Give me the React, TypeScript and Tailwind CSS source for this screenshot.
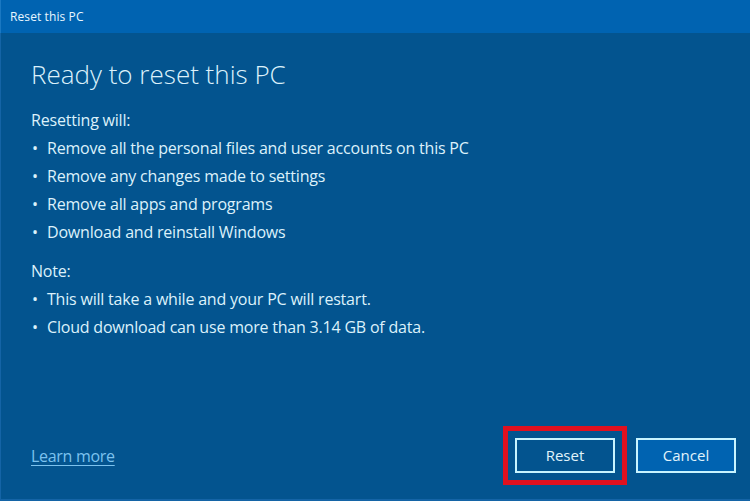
import React from "react";

const items1 = [
  "Remove all the personal files and user accounts on this PC",
  "Remove any changes made to settings",
  "Remove all apps and programs",
  "Download and reinstall Windows",
];
const items2 = [
  "This will take a while and your PC will restart.",
  "Cloud download can use more than 3.14 GB of data.",
];

function Bullet({ text }: { text: string }) {
  return (
    <div className="flex h-[28px] items-center">
      <span className="w-[16px] pl-[1px]">•</span>
      <span>{text}</span>
    </div>
  );
}

export default function App() {
  return (
    <div
      className="flex h-[501px] w-[750px] flex-col overflow-hidden bg-[#03548f] text-[#dcf1fb]"
      style={{ fontFamily: '"Open Sans", "Noto Sans", sans-serif' }}
    >
      <div className="flex h-[33px] shrink-0 items-center border-l border-[#1a78c2] bg-[#0063b1] pl-[9px] text-[12px] tracking-[0.1px] text-[#e8f6ff]">
        Reset this PC
      </div>
      <div className="flex flex-1 flex-col border-b-2 border-l border-[#1464a6] pl-[30px] pr-[14px]">
        <h1 className="mt-[25px] h-[32px] text-[26px] leading-[32px] font-light">
          Ready to reset this PC
        </h1>
        <div className="mt-[16px] text-[16px] tracking-[-0.2px]">
          <div className="flex h-[28px] items-center">Resetting will:</div>
          {items1.map((t) => (
            <Bullet key={t} text={t} />
          ))}
          <div className="mt-[11px] flex h-[28px] items-center">Note:</div>
          {items2.map((t) => (
            <Bullet key={t} text={t} />
          ))}
        </div>
        <div className="mt-auto mb-[26px] flex items-center justify-between">
          <a className="text-[16px] tracking-[-0.3px] text-[#7cc2ee] underline underline-offset-[3px]">
            Learn more
          </a>
          <div className="flex gap-[21px]">
            <button className="flex h-[35px] w-[100px] items-center justify-center border-2 border-[#c8f4ff] bg-[#03548f] text-[15px] text-[#e0f3fb] outline-[5px] outline-offset-[7px] outline-[#e0111f] outline-solid">
              Reset
            </button>
            <button className="flex h-[35px] w-[100px] items-center justify-center border-2 border-[#c8f4ff] bg-[#0063b1] text-[15px] text-[#e0f3fb]">
              Cancel
            </button>
          </div>
        </div>
      </div>
    </div>
  );
}
